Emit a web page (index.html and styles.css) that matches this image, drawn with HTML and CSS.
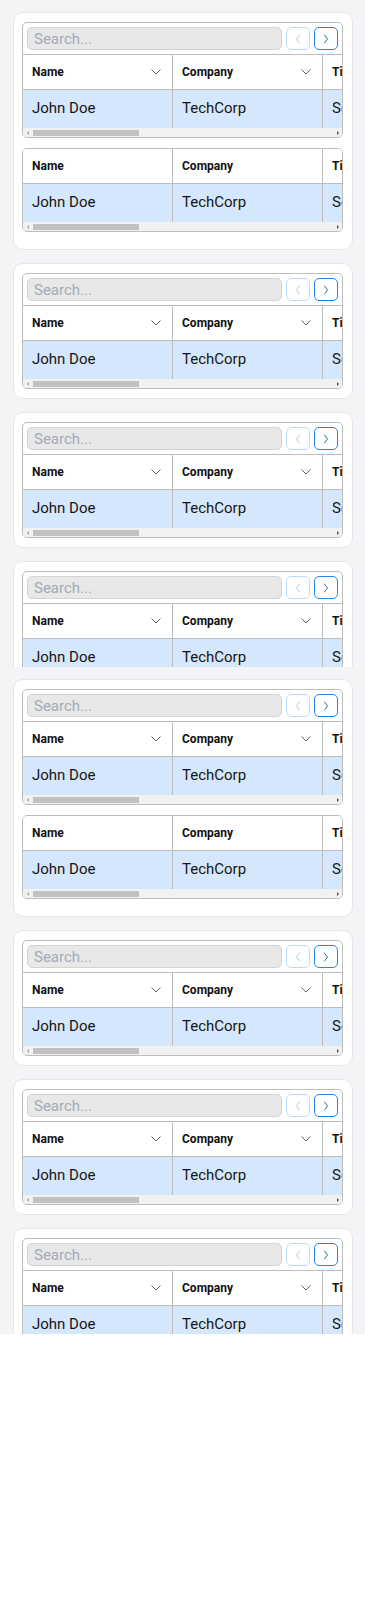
FILE: index.html
```html
<!DOCTYPE html>
<html lang="en">
<head>
<meta charset="utf-8">
<title>Data grids</title>
<link rel="stylesheet" href="styles.css">
</head>
<body>

<section class="screen">
  <div class="card">
    <div class="grid">
      <div class="toolbar">
        <input class="search" type="text" placeholder="Search...">
        <button class="nav prev" aria-label="Previous"><svg viewBox="0 0 8 12" width="8" height="12"><polyline points="5.5,2 2.5,6 5.5,10"/></svg></button>
        <button class="nav next" aria-label="Next"><svg viewBox="0 0 8 12" width="8" height="12"><polyline points="2.5,2 5.5,6 2.5,10"/></svg></button>
      </div>
      <div class="view">
        <div class="row head">
          <div class="cell">Name<svg class="chev" viewBox="0 0 10 6" width="10" height="6"><polyline points="0.5,0.5 5,5 9.5,0.5"/></svg></div>
          <div class="cell">Company<svg class="chev" viewBox="0 0 10 6" width="10" height="6"><polyline points="0.5,0.5 5,5 9.5,0.5"/></svg></div>
          <div class="cell">Title<svg class="chev" viewBox="0 0 10 6" width="10" height="6"><polyline points="0.5,0.5 5,5 9.5,0.5"/></svg></div>
          <div class="cell">Email</div>
          <div class="cell">Phone</div>
          <div class="cell">Location</div>
        </div>
        <div class="row data">
          <div class="cell">John Doe</div>
          <div class="cell">TechCorp</div>
          <div class="cell">Senior Engineer</div>
          <div class="cell">john@techcorp.com</div>
          <div class="cell">555-0100</div>
          <div class="cell">Seattle</div>
        </div>
      </div>
      <div class="hscroll"><span class="arrow left"></span><span class="track"><span class="thumb"></span></span><span class="arrow right"></span></div>
    </div>
    <div class="grid last">
      <div class="view">
        <div class="row head">
          <div class="cell">Name</div>
          <div class="cell">Company</div>
          <div class="cell">Title</div>
          <div class="cell">Email</div>
          <div class="cell">Phone</div>
          <div class="cell">Location</div>
        </div>
        <div class="row data">
          <div class="cell">John Doe</div>
          <div class="cell">TechCorp</div>
          <div class="cell">Senior Engineer</div>
          <div class="cell">john@techcorp.com</div>
          <div class="cell">555-0100</div>
          <div class="cell">Seattle</div>
        </div>
      </div>
      <div class="hscroll"><span class="arrow left"></span><span class="track"><span class="thumb"></span></span><span class="arrow right"></span></div>
    </div>
  </div>

  <div class="card">
    <div class="grid">
      <div class="toolbar">
        <input class="search" type="text" placeholder="Search...">
        <button class="nav prev" aria-label="Previous"><svg viewBox="0 0 8 12" width="8" height="12"><polyline points="5.5,2 2.5,6 5.5,10"/></svg></button>
        <button class="nav next" aria-label="Next"><svg viewBox="0 0 8 12" width="8" height="12"><polyline points="2.5,2 5.5,6 2.5,10"/></svg></button>
      </div>
      <div class="view">
        <div class="row head">
          <div class="cell">Name<svg class="chev" viewBox="0 0 10 6" width="10" height="6"><polyline points="0.5,0.5 5,5 9.5,0.5"/></svg></div>
          <div class="cell">Company<svg class="chev" viewBox="0 0 10 6" width="10" height="6"><polyline points="0.5,0.5 5,5 9.5,0.5"/></svg></div>
          <div class="cell">Title<svg class="chev" viewBox="0 0 10 6" width="10" height="6"><polyline points="0.5,0.5 5,5 9.5,0.5"/></svg></div>
          <div class="cell">Email</div>
          <div class="cell">Phone</div>
          <div class="cell">Location</div>
        </div>
        <div class="row data">
          <div class="cell">John Doe</div>
          <div class="cell">TechCorp</div>
          <div class="cell">Senior Engineer</div>
          <div class="cell">john@techcorp.com</div>
          <div class="cell">555-0100</div>
          <div class="cell">Seattle</div>
        </div>
      </div>
      <div class="hscroll"><span class="arrow left"></span><span class="track"><span class="thumb"></span></span><span class="arrow right"></span></div>
    </div>
  </div>

  <div class="card">
    <div class="grid">
      <div class="toolbar">
        <input class="search" type="text" placeholder="Search...">
        <button class="nav prev" aria-label="Previous"><svg viewBox="0 0 8 12" width="8" height="12"><polyline points="5.5,2 2.5,6 5.5,10"/></svg></button>
        <button class="nav next" aria-label="Next"><svg viewBox="0 0 8 12" width="8" height="12"><polyline points="2.5,2 5.5,6 2.5,10"/></svg></button>
      </div>
      <div class="view">
        <div class="row head">
          <div class="cell">Name<svg class="chev" viewBox="0 0 10 6" width="10" height="6"><polyline points="0.5,0.5 5,5 9.5,0.5"/></svg></div>
          <div class="cell">Company<svg class="chev" viewBox="0 0 10 6" width="10" height="6"><polyline points="0.5,0.5 5,5 9.5,0.5"/></svg></div>
          <div class="cell">Title<svg class="chev" viewBox="0 0 10 6" width="10" height="6"><polyline points="0.5,0.5 5,5 9.5,0.5"/></svg></div>
          <div class="cell">Email</div>
          <div class="cell">Phone</div>
          <div class="cell">Location</div>
        </div>
        <div class="row data">
          <div class="cell">John Doe</div>
          <div class="cell">TechCorp</div>
          <div class="cell">Senior Engineer</div>
          <div class="cell">john@techcorp.com</div>
          <div class="cell">555-0100</div>
          <div class="cell">Seattle</div>
        </div>
      </div>
      <div class="hscroll"><span class="arrow left"></span><span class="track"><span class="thumb"></span></span><span class="arrow right"></span></div>
    </div>
  </div>

  <div class="card">
    <div class="grid">
      <div class="toolbar">
        <input class="search" type="text" placeholder="Search...">
        <button class="nav prev" aria-label="Previous"><svg viewBox="0 0 8 12" width="8" height="12"><polyline points="5.5,2 2.5,6 5.5,10"/></svg></button>
        <button class="nav next" aria-label="Next"><svg viewBox="0 0 8 12" width="8" height="12"><polyline points="2.5,2 5.5,6 2.5,10"/></svg></button>
      </div>
      <div class="view">
        <div class="row head">
          <div class="cell">Name<svg class="chev" viewBox="0 0 10 6" width="10" height="6"><polyline points="0.5,0.5 5,5 9.5,0.5"/></svg></div>
          <div class="cell">Company<svg class="chev" viewBox="0 0 10 6" width="10" height="6"><polyline points="0.5,0.5 5,5 9.5,0.5"/></svg></div>
          <div class="cell">Title<svg class="chev" viewBox="0 0 10 6" width="10" height="6"><polyline points="0.5,0.5 5,5 9.5,0.5"/></svg></div>
          <div class="cell">Email</div>
          <div class="cell">Phone</div>
          <div class="cell">Location</div>
        </div>
        <div class="row data">
          <div class="cell">John Doe</div>
          <div class="cell">TechCorp</div>
          <div class="cell">Senior Engineer</div>
          <div class="cell">john@techcorp.com</div>
          <div class="cell">555-0100</div>
          <div class="cell">Seattle</div>
        </div>
      </div>
      <div class="hscroll"><span class="arrow left"></span><span class="track"><span class="thumb"></span></span><span class="arrow right"></span></div>
    </div>
  </div>
</section>

<section class="screen">
  <div class="card">
    <div class="grid">
      <div class="toolbar">
        <input class="search" type="text" placeholder="Search...">
        <button class="nav prev" aria-label="Previous"><svg viewBox="0 0 8 12" width="8" height="12"><polyline points="5.5,2 2.5,6 5.5,10"/></svg></button>
        <button class="nav next" aria-label="Next"><svg viewBox="0 0 8 12" width="8" height="12"><polyline points="2.5,2 5.5,6 2.5,10"/></svg></button>
      </div>
      <div class="view">
        <div class="row head">
          <div class="cell">Name<svg class="chev" viewBox="0 0 10 6" width="10" height="6"><polyline points="0.5,0.5 5,5 9.5,0.5"/></svg></div>
          <div class="cell">Company<svg class="chev" viewBox="0 0 10 6" width="10" height="6"><polyline points="0.5,0.5 5,5 9.5,0.5"/></svg></div>
          <div class="cell">Title<svg class="chev" viewBox="0 0 10 6" width="10" height="6"><polyline points="0.5,0.5 5,5 9.5,0.5"/></svg></div>
          <div class="cell">Email</div>
          <div class="cell">Phone</div>
          <div class="cell">Location</div>
        </div>
        <div class="row data">
          <div class="cell">John Doe</div>
          <div class="cell">TechCorp</div>
          <div class="cell">Senior Engineer</div>
          <div class="cell">john@techcorp.com</div>
          <div class="cell">555-0100</div>
          <div class="cell">Seattle</div>
        </div>
      </div>
      <div class="hscroll"><span class="arrow left"></span><span class="track"><span class="thumb"></span></span><span class="arrow right"></span></div>
    </div>
    <div class="grid last">
      <div class="view">
        <div class="row head">
          <div class="cell">Name</div>
          <div class="cell">Company</div>
          <div class="cell">Title</div>
          <div class="cell">Email</div>
          <div class="cell">Phone</div>
          <div class="cell">Location</div>
        </div>
        <div class="row data">
          <div class="cell">John Doe</div>
          <div class="cell">TechCorp</div>
          <div class="cell">Senior Engineer</div>
          <div class="cell">john@techcorp.com</div>
          <div class="cell">555-0100</div>
          <div class="cell">Seattle</div>
        </div>
      </div>
      <div class="hscroll"><span class="arrow left"></span><span class="track"><span class="thumb"></span></span><span class="arrow right"></span></div>
    </div>
  </div>

  <div class="card">
    <div class="grid">
      <div class="toolbar">
        <input class="search" type="text" placeholder="Search...">
        <button class="nav prev" aria-label="Previous"><svg viewBox="0 0 8 12" width="8" height="12"><polyline points="5.5,2 2.5,6 5.5,10"/></svg></button>
        <button class="nav next" aria-label="Next"><svg viewBox="0 0 8 12" width="8" height="12"><polyline points="2.5,2 5.5,6 2.5,10"/></svg></button>
      </div>
      <div class="view">
        <div class="row head">
          <div class="cell">Name<svg class="chev" viewBox="0 0 10 6" width="10" height="6"><polyline points="0.5,0.5 5,5 9.5,0.5"/></svg></div>
          <div class="cell">Company<svg class="chev" viewBox="0 0 10 6" width="10" height="6"><polyline points="0.5,0.5 5,5 9.5,0.5"/></svg></div>
          <div class="cell">Title<svg class="chev" viewBox="0 0 10 6" width="10" height="6"><polyline points="0.5,0.5 5,5 9.5,0.5"/></svg></div>
          <div class="cell">Email</div>
          <div class="cell">Phone</div>
          <div class="cell">Location</div>
        </div>
        <div class="row data">
          <div class="cell">John Doe</div>
          <div class="cell">TechCorp</div>
          <div class="cell">Senior Engineer</div>
          <div class="cell">john@techcorp.com</div>
          <div class="cell">555-0100</div>
          <div class="cell">Seattle</div>
        </div>
      </div>
      <div class="hscroll"><span class="arrow left"></span><span class="track"><span class="thumb"></span></span><span class="arrow right"></span></div>
    </div>
  </div>

  <div class="card">
    <div class="grid">
      <div class="toolbar">
        <input class="search" type="text" placeholder="Search...">
        <button class="nav prev" aria-label="Previous"><svg viewBox="0 0 8 12" width="8" height="12"><polyline points="5.5,2 2.5,6 5.5,10"/></svg></button>
        <button class="nav next" aria-label="Next"><svg viewBox="0 0 8 12" width="8" height="12"><polyline points="2.5,2 5.5,6 2.5,10"/></svg></button>
      </div>
      <div class="view">
        <div class="row head">
          <div class="cell">Name<svg class="chev" viewBox="0 0 10 6" width="10" height="6"><polyline points="0.5,0.5 5,5 9.5,0.5"/></svg></div>
          <div class="cell">Company<svg class="chev" viewBox="0 0 10 6" width="10" height="6"><polyline points="0.5,0.5 5,5 9.5,0.5"/></svg></div>
          <div class="cell">Title<svg class="chev" viewBox="0 0 10 6" width="10" height="6"><polyline points="0.5,0.5 5,5 9.5,0.5"/></svg></div>
          <div class="cell">Email</div>
          <div class="cell">Phone</div>
          <div class="cell">Location</div>
        </div>
        <div class="row data">
          <div class="cell">John Doe</div>
          <div class="cell">TechCorp</div>
          <div class="cell">Senior Engineer</div>
          <div class="cell">john@techcorp.com</div>
          <div class="cell">555-0100</div>
          <div class="cell">Seattle</div>
        </div>
      </div>
      <div class="hscroll"><span class="arrow left"></span><span class="track"><span class="thumb"></span></span><span class="arrow right"></span></div>
    </div>
  </div>

  <div class="card">
    <div class="grid">
      <div class="toolbar">
        <input class="search" type="text" placeholder="Search...">
        <button class="nav prev" aria-label="Previous"><svg viewBox="0 0 8 12" width="8" height="12"><polyline points="5.5,2 2.5,6 5.5,10"/></svg></button>
        <button class="nav next" aria-label="Next"><svg viewBox="0 0 8 12" width="8" height="12"><polyline points="2.5,2 5.5,6 2.5,10"/></svg></button>
      </div>
      <div class="view">
        <div class="row head">
          <div class="cell">Name<svg class="chev" viewBox="0 0 10 6" width="10" height="6"><polyline points="0.5,0.5 5,5 9.5,0.5"/></svg></div>
          <div class="cell">Company<svg class="chev" viewBox="0 0 10 6" width="10" height="6"><polyline points="0.5,0.5 5,5 9.5,0.5"/></svg></div>
          <div class="cell">Title<svg class="chev" viewBox="0 0 10 6" width="10" height="6"><polyline points="0.5,0.5 5,5 9.5,0.5"/></svg></div>
          <div class="cell">Email</div>
          <div class="cell">Phone</div>
          <div class="cell">Location</div>
        </div>
        <div class="row data">
          <div class="cell">John Doe</div>
          <div class="cell">TechCorp</div>
          <div class="cell">Senior Engineer</div>
          <div class="cell">john@techcorp.com</div>
          <div class="cell">555-0100</div>
          <div class="cell">Seattle</div>
        </div>
      </div>
      <div class="hscroll"><span class="arrow left"></span><span class="track"><span class="thumb"></span></span><span class="arrow right"></span></div>
    </div>
  </div>
</section>

</body>
</html>
```

FILE: styles.css
```css
* { box-sizing: border-box; }

html, body {
  margin: 0;
  padding: 0;
  background: #ffffff;
  font-family: Roboto, "Liberation Sans", Arial, sans-serif;
  color: #111111;
}

.screen {
  height: 667px;
  overflow: hidden;
  background: #f3f4f6;
  padding: 12px 12px 0 13px;
  display: flex;
  flex-direction: column;
  gap: 13px;
}

.card {
  flex-shrink: 0;
  background: #ffffff;
  border: 1px solid #e4e6ea;
  border-radius: 10px;
  padding: 9px 9px 9px 8px;
  display: flex;
  flex-direction: column;
  gap: 10px;
}

.grid {
  border: 1px solid #bdbdbd;
  border-radius: 5px;
  overflow: hidden;
  background: #ffffff;
}

.grid.last { margin-bottom: 8px; }

.toolbar {
  display: flex;
  gap: 4px;
  padding: 4px;
  border-bottom: 1px solid #bdbdbd;
}

.search {
  flex: 1;
  min-width: 0;
  height: 23px;
  margin: 0;
  padding: 0 6px;
  border: 1px solid #d3d3d3;
  border-radius: 5px;
  background: #e8e8e8;
  font-family: Roboto, "Liberation Sans", Arial, sans-serif;
  font-size: 15px;
  color: #222;
  outline: none;
}

.search::placeholder { color: #a2aab8; }

.nav {
  width: 24px;
  height: 23px;
  margin: 0;
  padding: 0;
  border-radius: 5px;
  background: #ffffff;
  display: flex;
  align-items: center;
  justify-content: center;
  cursor: pointer;
}

.nav svg {
  fill: none;
  stroke-width: 1;
  stroke-linecap: round;
  stroke-linejoin: round;
}

.nav.prev { border: 1px solid #b9dcfb; }
.nav.prev svg { stroke: #a9cdf2; }
.nav.next { border: 1px solid #2b84e6; }
.nav.next svg { stroke: #2b6fc0; }

.view {
  overflow: hidden;
}

.row {
  display: flex;
  width: max-content;
}

.cell {
  flex: 0 0 150px;
  width: 150px;
  border-right: 1px solid #bdbdbd;
  padding: 0 11px 0 9px;
  display: flex;
  align-items: center;
  justify-content: space-between;
  white-space: nowrap;
  overflow: hidden;
}

.row.head {
  height: 35px;
  border-bottom: 1px solid #bdbdbd;
  background: #ffffff;
}

.row.head .cell {
  font-size: 12px;
  font-weight: 700;
  color: #111111;
}

.chev {
  flex-shrink: 0;
  fill: none;
  stroke: #666666;
  stroke-width: 1;
}

.row.data {
  height: 38px;
  background: #d5e7fd;
}

.row.data .cell {
  font-size: 15px;
  color: #161616;
  padding-bottom: 2px;
}

.hscroll {
  display: flex;
  align-items: center;
  height: 9px;
  background: #f1f1f1;
}

.arrow {
  flex: 0 0 9px;
  height: 9px;
  display: flex;
  align-items: center;
  justify-content: center;
}

.arrow::before {
  content: "";
  width: 0;
  height: 0;
  border-top: 2px solid transparent;
  border-bottom: 2px solid transparent;
}

.arrow.left::before { border-right: 2px solid #a3a3a3; }
.arrow.right::before { border-left: 2px solid #505050; }

.track {
  flex: 1;
  height: 9px;
  display: flex;
  align-items: flex-end;
  padding-bottom: 1px;
}

.thumb {
  width: 106px;
  height: 6px;
  margin-left: 1px;
  background: #c1c1c1;
}
```
